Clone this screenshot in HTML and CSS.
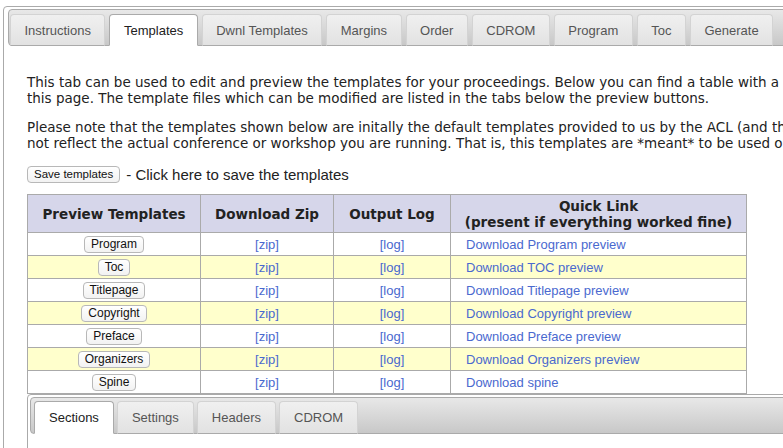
FILE: index.html
```html
<!DOCTYPE html>
<html>
<head>
<meta charset="utf-8">
<link rel="stylesheet" href="styles.css">
</head>
<body>
<div class="tabs">
  <ul class="tabs-nav">
    <li class="tab">Instructions</li>
    <li class="tab active">Templates</li>
    <li class="tab">Dwnl Templates</li>
    <li class="tab">Margins</li>
    <li class="tab">Order</li>
    <li class="tab">CDROM</li>
    <li class="tab">Program</li>
    <li class="tab">Toc</li>
    <li class="tab">Generate</li>
  </ul>
  <div class="panel">
    <p class="intro">This tab can be used to edit and preview the templates for your proceedings. Below you can find a table with a set of buttons to generate the previews of each of the templates shown on<br>this page. The template files which can be modified are listed in the tabs below the preview buttons.</p>
    <p class="intro">Please note that the templates shown below are initally the default templates provided to us by the ACL (and they might<br>not reflect the actual conference or workshop you are running. That is, this templates are *meant* to be used only as a starting point).</p>
    <div class="save-row">
      <button class="btn">Save templates</button>
      <span class="save-note">- Click here to save the templates</span>
    </div>
    <table class="preview">
      <thead>
        <tr>
          <th class="c1">Preview Templates</th>
          <th class="c2">Download Zip</th>
          <th class="c3">Output Log</th>
          <th class="c4">Quick Link<br>(present if everything worked fine)</th>
        </tr>
      </thead>
      <tbody>
        <tr><td class="ctr"><button class="btn">Program</button></td><td class="ctr"><a href="#">[zip]</a></td><td class="ctr"><a href="#">[log]</a></td><td class="quick"><a href="#">Download Program preview</a></td></tr>
        <tr class="odd"><td class="ctr"><button class="btn">Toc</button></td><td class="ctr"><a href="#">[zip]</a></td><td class="ctr"><a href="#">[log]</a></td><td class="quick"><a href="#">Download TOC preview</a></td></tr>
        <tr><td class="ctr"><button class="btn">Titlepage</button></td><td class="ctr"><a href="#">[zip]</a></td><td class="ctr"><a href="#">[log]</a></td><td class="quick"><a href="#">Download Titlepage preview</a></td></tr>
        <tr class="odd"><td class="ctr"><button class="btn">Copyright</button></td><td class="ctr"><a href="#">[zip]</a></td><td class="ctr"><a href="#">[log]</a></td><td class="quick"><a href="#">Download Copyright preview</a></td></tr>
        <tr><td class="ctr"><button class="btn">Preface</button></td><td class="ctr"><a href="#">[zip]</a></td><td class="ctr"><a href="#">[log]</a></td><td class="quick"><a href="#">Download Preface preview</a></td></tr>
        <tr class="odd"><td class="ctr"><button class="btn">Organizers</button></td><td class="ctr"><a href="#">[zip]</a></td><td class="ctr"><a href="#">[log]</a></td><td class="quick"><a href="#">Download Organizers preview</a></td></tr>
        <tr><td class="ctr"><button class="btn">Spine</button></td><td class="ctr"><a href="#">[zip]</a></td><td class="ctr"><a href="#">[log]</a></td><td class="quick"><a href="#">Download spine</a></td></tr>
      </tbody>
    </table>
    <div class="tabs inner">
      <ul class="tabs-nav">
        <li class="tab active">Sections</li>
        <li class="tab">Settings</li>
        <li class="tab">Headers</li>
        <li class="tab">CDROM</li>
      </ul>
      <div class="inner-panel"></div>
    </div>
  </div>
</div>
</body>
</html>
```

FILE: styles.css
```css
html, body {
  margin: 0;
  padding: 0;
  background: #fff;
  overflow: hidden;
  height: 448px;
}
body {
  padding: 6px 0 0 3px;
  box-sizing: border-box;
  font-family: "DejaVu Sans", Verdana, sans-serif;
  color: #222;
}
.tabs {
  width: 1100px;
  border: 1px solid #aaa;
  border-radius: 4px;
  padding: 2px 4px 0 4px;
  box-sizing: border-box;
  height: 460px;
}
.tabs-nav {
  list-style: none;
  margin: 0;
  padding: 4px 0 0 1px;
  display: flex;
  align-items: flex-end;
  height: 31px;
  border: 1px solid #aaa;
  border-radius: 4px;
  background: linear-gradient(#e8e8e8, #c8c8c8);
}
.tab {
  box-sizing: border-box;
  height: 32px;
  margin: 0 4px -1px 0;
  padding: 0 13.5px;
  display: flex;
  align-items: center;
  border: 1px solid #d3d3d3;
  border-bottom: 1px solid #aaa;
  border-radius: 4px 4px 0 0;
  background: linear-gradient(#f0f0f0, #e2e2e2);
  font-family: "Liberation Sans", Arial, sans-serif;
  font-size: 13px;
  color: #555;
}
.tab.active {
  background: #fff;
  border-color: #aaa;
  border-bottom-color: #fff;
  color: #212121;
}
.panel {
  padding: 15px 19px 0 19px;
}
.intro {
  margin: 13px 0;
  font-size: 13.5px;
  line-height: 16px;
  white-space: nowrap;
}
.save-row {
  display: flex;
  align-items: center;
  height: 20px;
  margin-top: 13px;
}
.btn {
  box-sizing: border-box;
  height: 17px;
  padding: 0 6px;
  border: 1px solid #b8b8b8;
  border-radius: 4px;
  background: linear-gradient(#ffffff, #f2f2f2);
  font-family: "Liberation Sans", Arial, sans-serif;
  font-size: 12px;
  line-height: 15px;
  color: #111;
}
.save-row .btn {
  font-size: 11.5px;
  padding: 0 6px;
}
.save-note {
  margin-left: 6px;
  font-family: "Liberation Sans", Arial, sans-serif;
  font-size: 15px;
  color: #222;
}
.preview {
  margin-top: 10px;
  border-collapse: collapse;
  width: 720px;
  table-layout: fixed;
}
.preview th, .preview td {
  border: 1px solid #aaa;
  padding: 0;
}
.preview th {
  background: #d6d6ea;
  height: 37px;
  font-size: 13.5px;
  font-weight: bold;
  line-height: 16px;
  color: #222;
}
.c1 { width: 172px; }
.c2 { width: 132px; }
.c3 { width: 116px; }
.preview td {
  height: 22px;
  font-family: "Liberation Sans", Arial, sans-serif;
  font-size: 13px;
  background: #fff;
}
.preview tr.odd td {
  background: #ffffcc;
}
.ctr {
  text-align: center;
}
.quick {
  padding-left: 15px !important;
}
.preview a {
  color: #4a69cf;
  text-decoration: none;
}
.preview .btn {
  vertical-align: middle;
}
.tabs.inner {
  width: auto;
  margin-top: 0;
  padding: 2px 2px 0 2px;
  height: 80px;
}
.inner .tabs-nav {
  padding: 3px 0 0 3px;
  height: 32px;
}
.inner .tab {
  height: 33px;
  padding: 0 14px;
  margin-right: 3px;
}
```
